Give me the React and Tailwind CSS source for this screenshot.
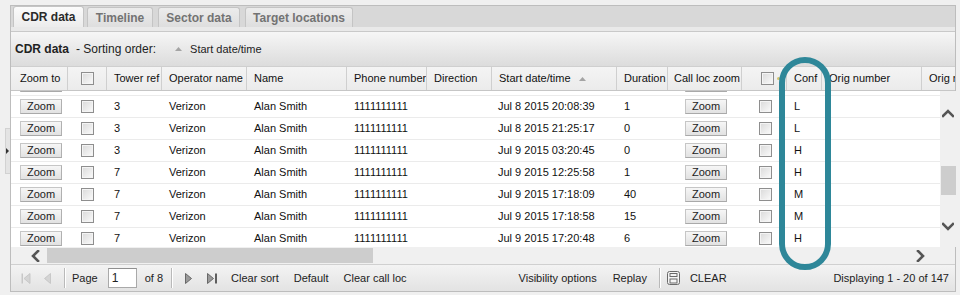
import React from "react";

const rows = [
  { t: "3", d: "Jul 8 2015 19:40:12", du: "2", c: "L" },
  { t: "3", d: "Jul 8 2015 20:08:39", du: "1", c: "L" },
  { t: "3", d: "Jul 8 2015 21:25:17", du: "0", c: "L" },
  { t: "3", d: "Jul 9 2015 03:20:45", du: "0", c: "H" },
  { t: "7", d: "Jul 9 2015 12:25:58", du: "1", c: "H" },
  { t: "7", d: "Jul 9 2015 17:18:09", du: "40", c: "M" },
  { t: "7", d: "Jul 9 2015 17:18:58", du: "15", c: "M" },
  { t: "7", d: "Jul 9 2015 17:20:48", du: "6", c: "H" },
];

function Check() {
  return (
    <span className="block w-[13px] h-[13px] shrink-0 border border-[#8e8e8e] bg-linear-to-br from-[#d9d9d9] to-[#fbfbfb] shadow-[inset_0_0_0_1px_#f4f4f4]" />
  );
}

function ZoomBtn() {
  return (
    <span className="flex items-center justify-center w-[42px] h-[15px] border border-[#c6c6c6] border-b-[#a9a9a9] border-r-[#b0b0b0] bg-linear-to-b from-[#f6f6f6] to-[#e2e2e2] text-[11px] leading-none text-[#222]">
      Zoom
    </span>
  );
}

function Chevron({ dir }) {
  const d = {
    up: "M1 8 L6 3 L11 8",
    down: "M1 2 L6 7 L11 2",
    left: "M7 1 L2 6 L7 11",
    right: "M2 1 L7 6 L2 11",
  }[dir];
  const vert = dir === "up" || dir === "down";
  return (
    <svg width={vert ? 12 : 9} height={vert ? 10 : 12} viewBox={vert ? "0 0 12 10" : "0 0 9 12"}>
      <path d={d} fill="none" stroke="#555" strokeWidth="2.6" strokeLinecap="square" />
    </svg>
  );
}

function Sep() {
  return <span className="block w-[2px] h-[20px] border-l border-[#b9b9b9] border-r border-r-white" />;
}

function C({ w, pl = "pl-[7px]", children }) {
  return <div className={`${w} ${pl} shrink-0 overflow-hidden`}>{children}</div>;
}

function Row({ r }) {
  return (
    <div className="flex h-[22px] shrink-0 items-center border-b border-[#ebebeb] whitespace-nowrap">
      <C w="w-[57px]" pl="pl-[9px]"><ZoomBtn /></C>
      <C w="w-[39px]" pl="pl-[13px]"><Check /></C>
      <C w="w-[55px]">{r.t}</C>
      <C w="w-[85px]">Verizon</C>
      <C w="w-[100px]">Alan Smith</C>
      <C w="w-[80px]">1111111111</C>
      <C w="w-[65px]"></C>
      <C w="w-[125px]" pl="pl-[6px]">{r.d}</C>
      <C w="w-[51px]">{r.du}</C>
      <C w="w-[74px]" pl="pl-[17px]"><ZoomBtn /></C>
      <C w="w-[45px]" pl="pl-[17px]"><Check /></C>
      <C w="w-[35px]">{r.c}</C>
      <C w="w-[100px]"></C>
      <C w="w-[100px]"></C>
    </div>
  );
}

function H({ w, children, pl = "pl-[7px]" }) {
  return (
    <div className={`${w} ${pl} h-full flex items-center shrink-0 border-r border-[#cfcfcf] overflow-hidden whitespace-nowrap`}>
      {children}
    </div>
  );
}

export default function App() {
  return (
    <div className="w-[960px] h-[295px] bg-[#f0f0f0] flex overflow-hidden relative font-['Liberation_Sans',Arial,sans-serif] text-[11px] text-[#111] leading-none">
      {/* left gutter with collapse handle */}
      <div className="w-[10px] shrink-0 flex items-start">
        <div className="mt-[128px] ml-[5px] w-[5px] h-[46px] bg-[#e4e4e4] border-y border-l border-[#d2d2d2] flex items-center justify-center">
          <svg width="4" height="6" viewBox="0 0 4 6"><path d="M0 0 L3 3 L0 6 Z" fill="#333" /></svg>
        </div>
      </div>

      {/* main panel */}
      <div className="mt-[5px] w-[946px] h-[287px] border border-[#bdbdbd] flex flex-col bg-[#d9d9d9] shrink-0">
        {/* tabs */}
        <div className="h-[21px] flex items-end pl-[2px] bg-[#d8d8d8] shrink-0 font-bold text-[12px]">
          <div className="w-[71px] h-[21px] mt-[1px] flex items-center justify-center bg-linear-to-b from-[#fbfbfb] to-[#ececec] border border-b-0 border-[#c4c4c4] rounded-t-[3px] text-[#2a2a2a]">CDR data</div>
          <div className="ml-[3px] w-[66px] h-[20px] flex items-center justify-center bg-linear-to-b from-[#ececec] to-[#dedede] border border-b-0 border-[#c4c4c4] rounded-t-[3px] text-[#737373]">Timeline</div>
          <div className="ml-[5px] w-[82px] h-[20px] flex items-center justify-center bg-linear-to-b from-[#ececec] to-[#dedede] border border-b-0 border-[#c4c4c4] rounded-t-[3px] text-[#737373]">Sector data</div>
          <div className="ml-[5px] w-[108px] h-[20px] flex items-center justify-center bg-linear-to-b from-[#ececec] to-[#dedede] border border-b-0 border-[#c4c4c4] rounded-t-[3px] text-[#737373]">Target locations</div>
        </div>
        <div className="h-[5px] bg-[#e9e9e9] border-b border-[#c9c9c9] shrink-0" />

        {/* sorting toolbar */}
        <div className="h-[34px] shrink-0 flex items-center pl-[4px] bg-linear-to-b from-[#f6f6f6] to-[#dcdcdc] text-[12px] text-[#222]">
          <span className="font-bold">CDR data</span>
          <span className="ml-[7px]">- Sorting order:</span>
          <span className="ml-[19px] flex items-center text-[11px]">
            <svg width="7" height="4" viewBox="0 0 7 4"><path d="M0 4 L3.5 0 L7 4 Z" fill="#a4a4a4" /></svg>
            <span className="ml-[8px]">Start date/time</span>
          </span>
        </div>

        {/* header */}
        <div className="h-[25px] shrink-0 flex bg-linear-to-b from-[#f4f4f4] to-[#ebebeb] border-t border-[#cfcfcf] border-b border-b-[#c6c6c6] overflow-hidden">
          <H w="w-[57px]" pl="pl-[9px]">Zoom to</H>
          <H w="w-[39px]" pl="pl-[13px]"><Check /></H>
          <H w="w-[55px]">Tower ref</H>
          <H w="w-[85px]">Operator name</H>
          <H w="w-[100px]">Name</H>
          <H w="w-[80px]">Phone number</H>
          <H w="w-[65px]">Direction</H>
          <H w="w-[125px]">
            Start date/time
            <svg className="ml-[8px]" width="7" height="4" viewBox="0 0 7 4"><path d="M0 4 L3.5 0 L7 4 Z" fill="#a4a4a4" /></svg>
          </H>
          <H w="w-[51px]">Duration</H>
          <H w="w-[74px]" pl="pl-[6px]">Call loc zoom</H>
          <H w="w-[45px]" pl="pl-[19px]">
            <Check />
            <span className="ml-[3px] w-[3px] h-[3px] bg-[#d6c36a] rounded-full" />
          </H>
          <H w="w-[35px]">Conf</H>
          <H w="w-[100px]">Orig number</H>
          <H w="w-[100px]">Orig number</H>
        </div>

        {/* body */}
        <div className="h-[156px] shrink-0 flex">
          <div className="w-[929px] shrink-0 h-full bg-white overflow-hidden">
            <div className="-mt-[17px] flex flex-col">
              {rows.map((r, i) => (
                <Row key={i} r={r} />
              ))}
            </div>
          </div>
          <div className="w-[16px] shrink-0 h-full bg-[#f0f0f0] flex flex-col items-center">
            <div className="mt-[17px] h-[10px] flex items-center"><Chevron dir="up" /></div>
            <div className="mt-[48px] w-[15px] h-[29px] bg-[#cdcdcd]" />
            <div className="mt-[27px] h-[10px] flex items-center"><Chevron dir="down" /></div>
          </div>
        </div>

        {/* horizontal scrollbar */}
        <div className="h-[17px] shrink-0 bg-[#f0f0f0] flex items-center">
          <div className="ml-[19px] w-[10px] flex justify-center"><Chevron dir="left" /></div>
          <div className="ml-[7px] w-[326px] h-[15px] bg-[#cdcdcd]" />
          <div className="ml-[542px] w-[10px] flex justify-center"><Chevron dir="right" /></div>
        </div>

        {/* paging toolbar */}
        <div className="h-[27px] shrink-0 flex items-center border-t border-[#d0d0d0] bg-linear-to-b from-[#f3f3f3] to-[#e3e3e3] text-[11px] text-[#222] whitespace-nowrap">
          <svg className="ml-[10px]" width="10" height="11" viewBox="0 0 10 11">
            <rect x="0.5" y="0.5" width="1.5" height="10" fill="#c7c7c7" />
            <path d="M9 0.5 L3 5.5 L9 10.5 Z" fill="#d4d4d4" stroke="#c2c2c2" strokeWidth="0.8" />
          </svg>
          <svg className="ml-[13px]" width="7" height="11" viewBox="0 0 7 11">
            <path d="M6.5 0.5 L0.5 5.5 L6.5 10.5 Z" fill="#d4d4d4" stroke="#c2c2c2" strokeWidth="0.8" />
          </svg>
          <span className="ml-[13px]"><Sep /></span>
          <span className="ml-[6px]">Page</span>
          <span className="ml-[10px] w-[29px] h-[20px] bg-white border border-[#a9a9a9] border-t-[#8f8f8f] flex items-center pl-[3px] text-[12px]">1</span>
          <span className="ml-[8px]">of 8</span>
          <span className="ml-[8px]"><Sep /></span>
          <svg className="ml-[12px]" width="7" height="11" viewBox="0 0 7 11">
            <path d="M0.5 0.5 L6.5 5.5 L0.5 10.5 Z" fill="#9a9a9a" stroke="#5e5e5e" strokeWidth="0.9" />
          </svg>
          <svg className="ml-[15px]" width="11" height="11" viewBox="0 0 11 11">
            <path d="M0.5 0.5 L6.5 5.5 L0.5 10.5 Z" fill="#9a9a9a" stroke="#5e5e5e" strokeWidth="0.9" />
            <rect x="8" y="0.5" width="2" height="10" fill="#5e5e5e" />
          </svg>
          <span className="ml-[13px]">Clear sort</span>
          <span className="ml-[15px]">Default</span>
          <span className="ml-[15px]">Clear call loc</span>
          <span className="ml-[112px]">Visibility options</span>
          <span className="ml-[16px]">Replay</span>
          <span className="ml-[12px]"><Sep /></span>
          <svg className="ml-[6px]" width="13" height="14" viewBox="0 0 13 14">
            <rect x="0.5" y="0.5" width="12" height="13" rx="2" fill="#f4f4f4" stroke="#6a6a6a" />
            <rect x="3" y="2.5" width="7" height="3" fill="none" stroke="#6a6a6a" />
            <rect x="3" y="8" width="7" height="4" fill="none" stroke="#6a6a6a" />
          </svg>
          <span className="ml-[10px]">CLEAR</span>
          <span className="ml-auto mr-[6px]">Displaying 1 - 20 of 147</span>
        </div>
      </div>

      {/* highlight overlay */}
      <div className="absolute left-[779px] top-[57px] w-[52px] h-[213px] border-[6px] border-[#2e8799] rounded-full pointer-events-none" />
    </div>
  );
}
